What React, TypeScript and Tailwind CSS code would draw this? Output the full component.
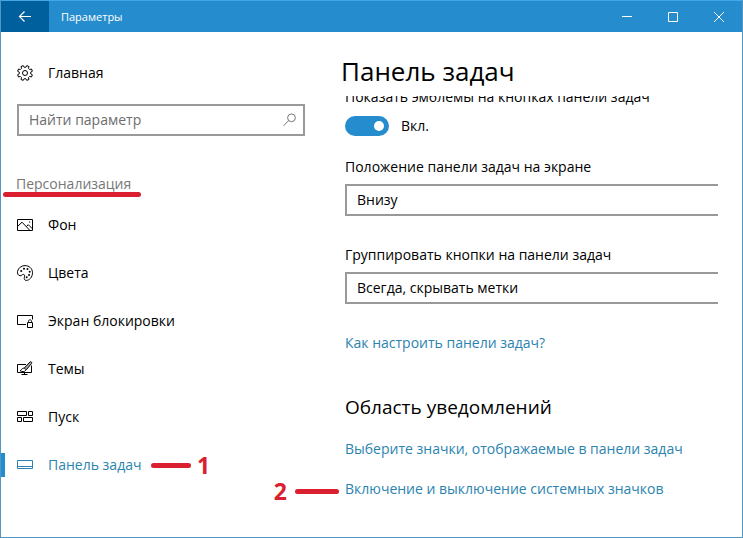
import React from "react";

type IconProps = { className?: string };

function Glyph({ className = "", children }: IconProps & { children: React.ReactNode }) {
  return (
    <svg
      viewBox="0 0 16 16"
      className={`h-4 w-4 shrink-0 ${className}`}
      fill="none"
      stroke="currentColor"
      strokeWidth="1"
      aria-hidden="true"
    >
      {children}
    </svg>
  );
}

// Eight-tooth gear outline, drawn from alternating radii
const gearPath = (() => {
  const pts: string[] = [];
  const steps: [number, number][] = [
    [-14, 5.8],
    [-9, 7.6],
    [9, 7.6],
    [14, 5.8],
  ];
  for (let i = 0; i < 8; i++) {
    for (const [offset, r] of steps) {
      const a = ((i * 45 + 22.5 + offset) * Math.PI) / 180;
      pts.push(`${(8 + r * Math.cos(a)).toFixed(2)} ${(8 + r * Math.sin(a)).toFixed(2)}`);
    }
  }
  return `M${pts.join("L")}Z`;
})();

function IconGear() {
  return (
    <Glyph>
      <path d={gearPath} />
      <circle cx="8" cy="8" r="2.5" />
    </Glyph>
  );
}

function IconPicture() {
  return (
    <Glyph>
      <path d="M.5 2.5h15v11H.5z" />
      <path d="M.5 9.5 5 5.2l8 8.3M9.3 9.6l2-1.9 4.2 4.2" />
      <path d="M12 5h1.2" />
    </Glyph>
  );
}

function IconPalette() {
  return (
    <Glyph>
      <path d="M.6 6.2C1.4 2.9 4.3.6 8 .6c4.3 0 7.5 3 7.5 7.1 0 4.4-3 7.7-6.2 7.7-2 0-2.3-1.500-1.9-3.1.4-1.7.2-2.8-1-2.9-1.2-.1-1.6 1.5-3.3 1.3C1.1 10.5.1 8.6.6 6.2Z" />
      <g fill="currentColor" stroke="none">
        <circle cx="4.2" cy="6" r="1" />
        <circle cx="7" cy="3.7" r="1" />
        <circle cx="10.5" cy="4" r="1" />
        <circle cx="12.7" cy="6.7" r="1" />
        <circle cx="12" cy="10" r="1" />
        <circle cx="9.7" cy="12.3" r="1" />
      </g>
    </Glyph>
  );
}

function IconLockScreen() {
  return (
    <Glyph>
      <path d="M9 11.5H.5v-9h15v4" />
      <path d="M10.5 9.5h5v5h-5zM11.5 9.5V8.3c0-.9.6-1.5 1.5-1.5s1.5.6 1.5 1.5v1.2" />
    </Glyph>
  );
}

function IconThemes() {
  return (
    <Glyph>
      <path d="M9 3.5H.5v8h14v-7M7.5 11.5v2M4.500 13.5h6" />
      <path d="M7.2 7.2 13 .9c.8-.7 2.300.5 1.600 1.500L9.300 8.800" fill="#aaa" />
      <path d="M3 9.6c1.500 0 1.500-2.100 3.300-2.400 1.400-.2 2.800.9 2.300 2.100-.7 1.800-3.900 1.600-5.600.3Z" fill="#fff" />
    </Glyph>
  );
}

function IconStart() {
  return (
    <Glyph>
      <path d="M.5 2.5h9v4h-9zM11.5 2.5h4v4h-4zM.5 8.5h4v4h-4zM6.5 8.5h9v4h-9z" />
    </Glyph>
  );
}

function IconTaskbar() {
  return (
    <Glyph>
      <path d="M.5 3.5h15v8H.5zM.5 9.5h15" />
    </Glyph>
  );
}

const navItems = [
  { label: "Фон", icon: <IconPicture /> },
  { label: "Цвета", icon: <IconPalette /> },
  { label: "Экран блокировки", icon: <IconLockScreen /> },
  { label: "Темы", icon: <IconThemes /> },
  { label: "Пуск", icon: <IconStart /> },
  { label: "Панель задач", icon: <IconTaskbar />, active: true, mark: "1" },
];

function TitleBar() {
  return (
    <header className="flex h-8 items-stretch border-t border-[#45a8e6] bg-[#258cce] text-white">
      <button type="button" aria-label="Назад" className="flex w-12 items-center justify-center bg-[#00609e]">
        <Glyph>
          <path d="M2.5 7.5H14M7.5 2.5l-5 5 5 5" strokeWidth="1.2" />
        </Glyph>
      </button>
      <span className="flex flex-1 items-center pl-3 text-[11px]">Параметры</span>
      <button type="button" aria-label="Свернуть" className="flex w-[46px] items-center justify-center">
        <svg viewBox="0 0 10 10" className="h-2.5 w-2.5" stroke="currentColor" fill="none">
          <path d="M0 4.5h10" />
        </svg>
      </button>
      <button type="button" aria-label="Развернуть" className="flex w-[46px] items-center justify-center">
        <svg viewBox="0 0 10 10" className="h-2.5 w-2.5" stroke="currentColor" fill="none">
          <path d="M.5.5h9v9h-9z" />
        </svg>
      </button>
      <button type="button" aria-label="Закрыть" className="flex w-[46px] items-center justify-center">
        <svg viewBox="0 0 10 10" className="h-2.5 w-2.5" stroke="currentColor" fill="none">
          <path d="M0 0l10 10M10 0 0 10" />
        </svg>
      </button>
    </header>
  );
}

function Sidebar() {
  return (
    <aside className="w-80 shrink-0 pt-4">
      <a href="#home" className="flex h-[50px] items-center gap-[15px] pl-4">
        <IconGear />
        Главная
      </a>

      <label className="mx-4 mt-1.5 flex h-8 items-center border-2 border-[#999] pr-1.5 pl-2.5">
        <input
          type="text"
          aria-label="Найти параметр"
          placeholder="Найти параметр"
          className="min-w-0 flex-1 bg-transparent outline-none placeholder:text-[#6d6d6d]"
        />
        <Glyph className="text-[#777]">
          <circle cx="10.5" cy="5.8" r="3.9" />
          <path d="M7.7 8.6 2.5 13.8" />
        </Glyph>
      </label>

      <h2 className="relative mt-[31px] flex h-[34px] items-center pl-[15px] text-[#777]">
        Персонализация
        <span className="absolute top-[25px] left-[2px] h-[5px] w-[138px] rounded-full bg-[#d91f30]" />
      </h2>

      <nav>
        {navItems.map((item) => (
          <a
            key={item.label}
            href="#section"
            className={`relative flex h-12 items-center gap-[15px] pl-4 ${item.active ? "text-[#2b83b0]" : ""}`}
          >
            {item.active && <span className="absolute top-3 left-0 h-6 w-1 bg-[#258cce]" />}
            {item.icon}
            {item.label}
            {item.mark && (
              <span className="absolute left-[150px] flex items-center gap-1.5 text-[23px] font-bold text-[#d91f30]">
                <span className="h-[5px] w-10 rounded-full bg-[#d91f30]" />
                {item.mark}
              </span>
            )}
          </a>
        ))}
      </nav>
    </aside>
  );
}

function SelectField({ id, label, value }: { id: string; label: string; value: string }) {
  return (
    <div className="mb-6">
      <label htmlFor={id} className="flex h-[30px] items-center">
        {label}
      </label>
      <select
        id={id}
        className="mt-0.5 block h-8 w-full appearance-none border-2 border-r-0 border-[#999] bg-white pl-2.5 outline-none"
      >
        <option>{value}</option>
      </select>
    </div>
  );
}

function Content() {
  return (
    <main className="min-w-0 flex-1 pt-4 pr-6 pl-6">
      <h1 className="-ml-1 flex h-12 items-center text-[26px]">Панель задач</h1>

      {/* scrolled a little, so the first caption is cut by the header */}
      <div className="overflow-hidden">
        <p className="-mt-[9px] leading-5" id="badges">
          Показать эмблемы на кнопках панели задач
        </p>
        <label className="mt-[9px] mb-4 flex h-5 w-fit items-center gap-3">
          <input type="checkbox" defaultChecked aria-describedby="badges" className="peer sr-only" />
          <span className="flex h-5 w-11 items-center justify-end rounded-full bg-[#258cce] pr-[5px]">
            <span className="h-2.5 w-2.5 rounded-full bg-white" />
          </span>
          Вкл.
        </label>

        <SelectField id="position" label="Положение панели задач на экране" value="Внизу" />
        <SelectField id="grouping" label="Группировать кнопки на панели задач" value="Всегда, скрывать метки" />
      </div>

      <a href="#help" className="mt-[3px] block w-fit leading-6 text-[#2b83b0]">
        Как настроить панели задач?
      </a>

      <h2 className="mt-9 text-[19px] leading-8">Область уведомлений</h2>
      <a href="#icons" className="mt-3.5 block w-fit leading-6 text-[#2b83b0]">
        Выберите значки, отображаемые в панели задач
      </a>
      <a href="#system" className="relative mt-4 block w-fit leading-6 text-[#2b83b0]">
        Включение и выключение системных значков
        <span className="absolute top-0.5 right-full mr-1.5 flex h-6 items-center gap-2 text-[23px] font-bold text-[#d91f30]">
          2
          <span className="h-[5px] w-11 rounded-full bg-[#d91f30]" />
        </span>
      </a>
    </main>
  );
}

export default function App() {
  return (
    <div className="flex min-h-screen flex-col border-x border-b border-[#4f97c4] bg-white font-['Open_Sans','Noto_Sans',sans-serif] text-sm text-black">
      <TitleBar />
      <div className="flex flex-1">
        <Sidebar />
        <Content />
      </div>
    </div>
  );
}
